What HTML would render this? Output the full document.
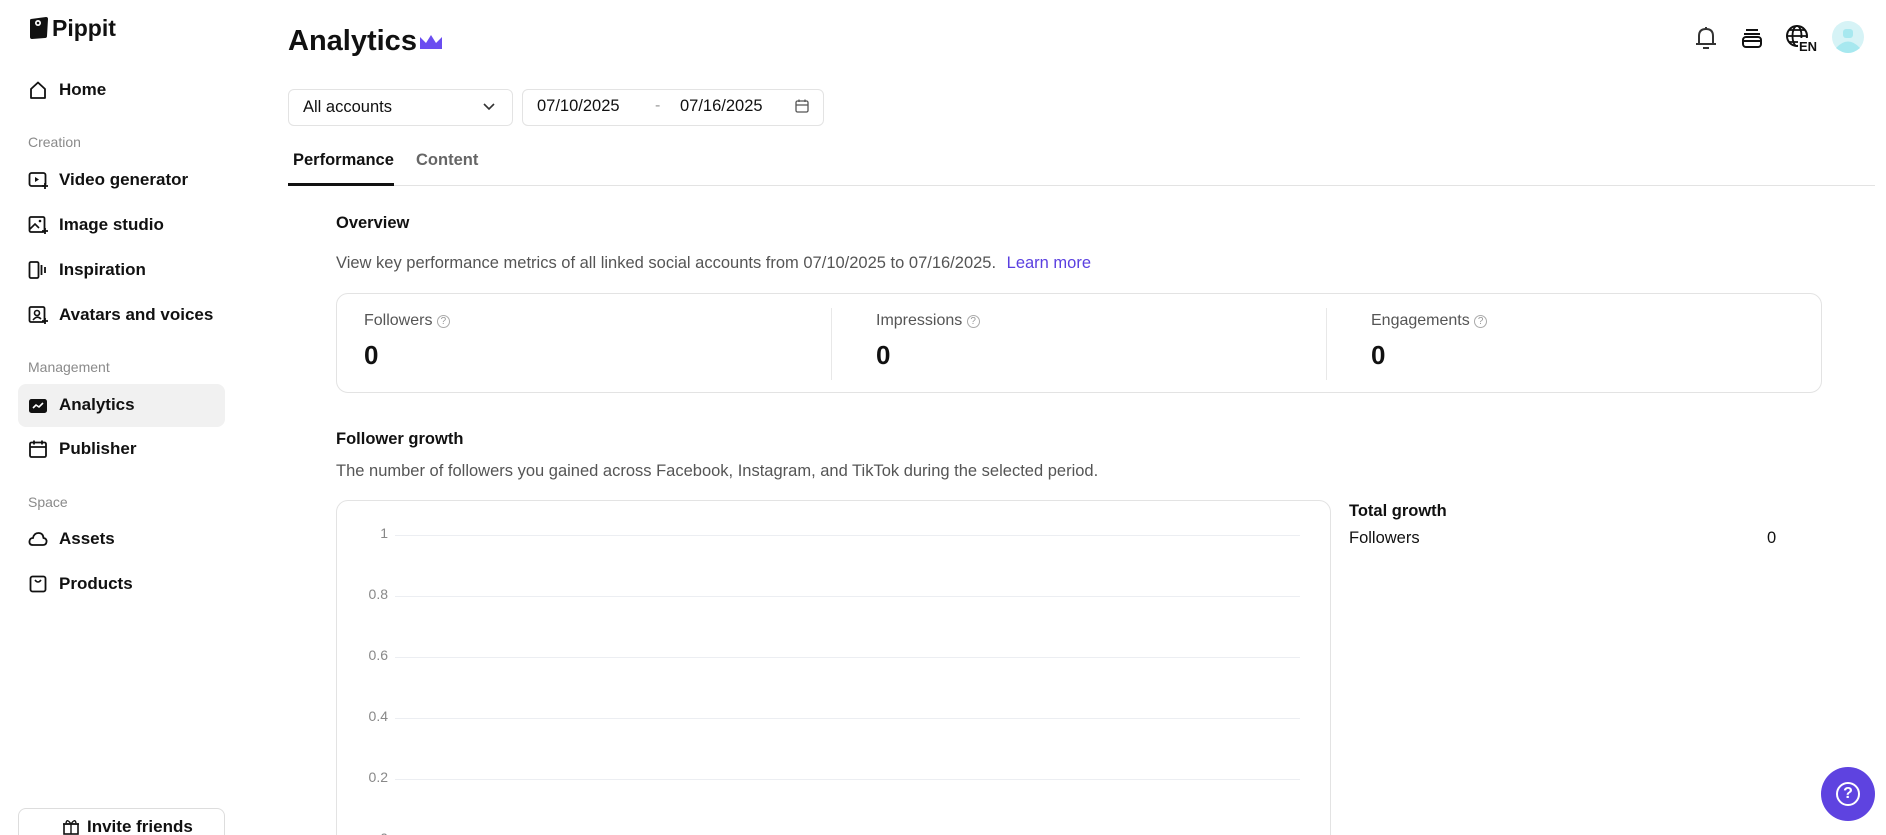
<!DOCTYPE html>
<html style="width:1886px;height:835px;overflow:hidden"><head><meta charset="utf-8"><style>
*{margin:0;padding:0;box-sizing:border-box}
body{width:1886px;height:835px;overflow:hidden;background:#fff;font-family:"Liberation Sans",Arial,sans-serif;color:#111;position:relative}
.a{position:absolute;white-space:nowrap}
.nav{font-size:17px;font-weight:600;color:#111}
.sec{font-size:14px;color:#8a8a8a}
.ic{position:absolute;left:28px;width:20px;height:20px}
.lbl{font-size:16px;color:#555}
.big{font-size:26px;font-weight:700}
.grid{position:absolute;left:395px;width:905px;height:1px;background:#eceef2}
.yl{position:absolute;width:50px;text-align:right;left:338px;font-size:14px;color:#888}
.q{color:#999;border:1px solid #aaa;border-radius:50%;display:inline-block;width:13px;height:13px;line-height:12px;text-align:center;font-size:10px;vertical-align:1px}
</style></head><body>
<svg class="a" style="left:29px;top:16px" width="20" height="24" viewBox="0 0 20 24"><path d="M2 3 L17 1 Q19 1 19 3 L18 20 Q18 22 16 22 L3 23 Q1 23 1 21 L1 5 Q1 3 2 3Z" fill="#111"/><circle cx="9" cy="7" r="3" fill="#fff"/><circle cx="9" cy="7" r="1.3" fill="#111"/></svg>
<div class="a" style="left:52px;top:15px;font-size:23px;font-weight:700">Pippit</div>

<svg class="ic" style="top:80px" viewBox="0 0 20 20"><path d="M3 9 L10 2.5 L17 9 V18 H3Z" fill="none" stroke="#111" stroke-width="1.8" stroke-linejoin="round"/></svg>
<div class="a nav" style="left:59px;top:80px">Home</div>
<div class="a sec" style="left:28px;top:134px">Creation</div>
<svg class="ic" style="top:170px" viewBox="0 0 20 20"><rect x="1.5" y="3" width="16" height="13" rx="2" fill="none" stroke="#111" stroke-width="1.8"/><path d="M7 7 L11 9.5 L7 12Z" fill="#111"/><path d="M17 13 v6 M14 16 h6" stroke="#111" stroke-width="1.8"/></svg>
<div class="a nav" style="left:59px;top:170px">Video generator</div>
<svg class="ic" style="top:215px" viewBox="0 0 20 20"><rect x="1.5" y="2" width="15" height="15" rx="1.5" fill="none" stroke="#111" stroke-width="1.8"/><path d="M2 14 L7 9 L11 13" fill="none" stroke="#111" stroke-width="1.6"/><circle cx="12" cy="6" r="1.3" fill="#111"/><path d="M17 13 v6 M14 16 h6" stroke="#111" stroke-width="1.8"/></svg>
<div class="a nav" style="left:59px;top:215px">Image studio</div>
<svg class="ic" style="top:260px" viewBox="0 0 20 20"><rect x="1.5" y="2" width="9" height="16" rx="1.5" fill="none" stroke="#111" stroke-width="1.8"/><path d="M13.5 5 v10 M17 7 v6" stroke="#111" stroke-width="1.8"/></svg>
<div class="a nav" style="left:59px;top:260px">Inspiration</div>
<svg class="ic" style="top:305px" viewBox="0 0 20 20"><rect x="1.5" y="2" width="15" height="15" rx="1.5" fill="none" stroke="#111" stroke-width="1.8"/><circle cx="9" cy="8" r="2.5" fill="none" stroke="#111" stroke-width="1.6"/><path d="M5 15 Q9 10 13 14" fill="none" stroke="#111" stroke-width="1.6"/><path d="M17 13 v6 M14 16 h6" stroke="#111" stroke-width="1.8"/></svg>
<div class="a nav" style="left:59px;top:305px">Avatars and voices</div>
<div class="a sec" style="left:28px;top:359px">Management</div>
<div class="a" style="left:18px;top:384px;width:207px;height:43px;background:#f1f1f1;border-radius:8px"></div>
<svg class="ic" style="top:396px" viewBox="0 0 20 20"><rect x="1" y="3" width="18" height="14" rx="2.5" fill="#111"/><path d="M5 12 L8 9 L11 11 L15 7" fill="none" stroke="#fff" stroke-width="1.6"/></svg>
<div class="a nav" style="left:59px;top:395px">Analytics</div>
<svg class="ic" style="top:439px" viewBox="0 0 20 20"><rect x="2" y="3.5" width="16" height="14.5" rx="1.5" fill="none" stroke="#111" stroke-width="1.8"/><path d="M2 8 h16 M6 1.5 v4 M14 1.5 v4" stroke="#111" stroke-width="1.8"/></svg>
<div class="a nav" style="left:59px;top:439px">Publisher</div>
<div class="a sec" style="left:28px;top:494px">Space</div>
<svg class="ic" style="top:529px" viewBox="0 0 20 20"><path d="M5 16 Q1 16 1.5 12 Q2 9 5 9 Q6 4 10.5 4 Q15 4 15.5 9 Q19 9.5 18.5 13 Q18 16 15 16Z" fill="none" stroke="#111" stroke-width="1.8"/></svg>
<div class="a nav" style="left:59px;top:529px">Assets</div>
<svg class="ic" style="top:574px" viewBox="0 0 20 20"><rect x="2.5" y="2.5" width="15" height="15" rx="2" fill="none" stroke="#111" stroke-width="1.8"/><path d="M7 6 Q10 10 13 6" fill="none" stroke="#111" stroke-width="1.6"/></svg>
<div class="a nav" style="left:59px;top:574px">Products</div>
<div class="a" style="left:18px;top:808px;width:207px;height:40px;border:1px solid #ddd;border-radius:8px"></div>
<svg class="a" style="left:62px;top:818px" width="18" height="18" viewBox="0 0 18 18"><rect x="2" y="6" width="14" height="10" fill="none" stroke="#111" stroke-width="1.6"/><path d="M1 6 h16 M9 6 v10 M9 6 Q5 0 4 5 M9 6 Q13 0 14 5" fill="none" stroke="#111" stroke-width="1.4"/></svg>
<div class="a nav" style="left:87px;top:817px">Invite friends</div>

<div class="a" style="left:288px;top:25px;font-size:29px;font-weight:700">Analytics</div>
<svg class="a" style="left:419px;top:33px" width="24" height="18" viewBox="0 0 24 18"><path d="M1 4 L7 10 L12 2 L17 10 L23 4 V16 H1Z" fill="#6a4df0"/></svg>
<svg class="a" style="left:1694px;top:24px" width="24" height="28" viewBox="0 0 24 28"><path d="M5 20 V12 Q5 5 12 5 Q19 5 19 12 V20 M2 20 H22 M9 24 H15 M12 3 V5" fill="none" stroke="#333" stroke-width="2"/></svg>
<svg class="a" style="left:1740px;top:26px" width="24" height="24" viewBox="0 0 24 24"><path d="M6 4 H18 M4 8 H20" stroke="#111" stroke-width="2"/><rect x="3" y="11" width="18" height="10" rx="3" fill="none" stroke="#111" stroke-width="2"/><path d="M3 15 H21" stroke="#111" stroke-width="2"/></svg>
<svg class="a" style="left:1785px;top:24px" width="34" height="28" viewBox="0 0 34 28"><circle cx="12" cy="12" r="10" fill="none" stroke="#111" stroke-width="2"/><ellipse cx="12" cy="12" rx="4.5" ry="10" fill="none" stroke="#111" stroke-width="1.8"/><path d="M2 12 H22 M4 6 H20 M4 18 H14" stroke="#111" stroke-width="1.8"/><rect x="13" y="14" width="21" height="14" fill="#fff"/><text x="14" y="27" font-family="Liberation Sans" font-weight="700" font-size="13" fill="#111">EN</text></svg>
<svg class="a" style="left:1832px;top:21px" width="32" height="32" viewBox="0 0 32 32"><circle cx="16" cy="16" r="16" fill="#d6f3f6"/><rect x="11" y="8" width="10" height="9" rx="3" fill="#a7e8ef"/><path d="M4 27 Q16 14 28 27 Q22 32 16 32 Q10 32 4 27Z" fill="#a7e8ef"/></svg>

<div class="a" style="left:288px;top:89px;width:225px;height:37px;border:1px solid #e3e3e3;border-radius:6px"></div>
<div class="a" style="left:303px;top:98px;font-size:16.5px">All accounts</div>
<svg class="a" style="left:482px;top:100px" width="14" height="14" viewBox="0 0 14 14"><path d="M2 4 L7 9 L12 4" fill="none" stroke="#333" stroke-width="1.6"/></svg>
<div class="a" style="left:522px;top:89px;width:302px;height:37px;border:1px solid #e3e3e3;border-radius:6px"></div>
<div class="a" style="left:537px;top:97px;font-size:16.5px">07/10/2025</div>
<div class="a" style="left:655px;top:97px;font-size:16px;color:#999">-</div>
<div class="a" style="left:680px;top:97px;font-size:16.5px">07/16/2025</div>
<svg class="a" style="left:794px;top:98px" width="16" height="16" viewBox="0 0 16 16"><rect x="2" y="3" width="12" height="11" rx="1.5" fill="none" stroke="#555" stroke-width="1.3"/><path d="M2 7 H14 M5 1.5 V4 M11 1.5 V4" stroke="#555" stroke-width="1.3"/></svg>

<div class="a" style="left:293px;top:151px;font-size:16.5px;font-weight:600">Performance</div>
<div class="a" style="left:416px;top:151px;font-size:16.5px;font-weight:600;color:#666">Content</div>
<div class="a" style="left:288px;top:185px;width:1587px;height:1px;background:#e3e3e3"></div>
<div class="a" style="left:288px;top:183px;width:106px;height:3px;background:#111"></div>

<div class="a" style="left:336px;top:214px;font-size:16.5px;font-weight:700">Overview</div>
<div class="a" style="left:336px;top:254px;font-size:16.5px;color:#555">View key performance metrics of all linked social accounts from 07/10/2025 to 07/16/2025. <span style="color:#5a3fe0;margin-left:6px">Learn more</span></div>
<div class="a" style="left:336px;top:293px;width:1486px;height:100px;border:1px solid #e3e3e3;border-radius:12px"></div>
<div class="a" style="left:831px;top:308px;width:1px;height:72px;background:#e8e8e8"></div>
<div class="a" style="left:1326px;top:308px;width:1px;height:72px;background:#e8e8e8"></div>
<div class="a lbl" style="left:364px;top:312px">Followers <span class="q">?</span></div>
<div class="a big" style="left:364px;top:340px">0</div>
<div class="a lbl" style="left:876px;top:312px">Impressions <span class="q">?</span></div>
<div class="a big" style="left:876px;top:340px">0</div>
<div class="a lbl" style="left:1371px;top:312px">Engagements <span class="q">?</span></div>
<div class="a big" style="left:1371px;top:340px">0</div>

<div class="a" style="left:336px;top:430px;font-size:16.5px;font-weight:700">Follower growth</div>
<div class="a" style="left:336px;top:462px;font-size:16.5px;color:#555">The number of followers you gained across Facebook, Instagram, and TikTok during the selected period.</div>
<div class="a" style="left:336px;top:500px;width:995px;height:360px;border:1px solid #e3e3e3;border-radius:12px"></div>
<div class="grid" style="top:535px"></div><div class="yl" style="top:525px">1</div>
<div class="grid" style="top:596px"></div><div class="yl" style="top:586px">0.8</div>
<div class="grid" style="top:657px"></div><div class="yl" style="top:647px">0.6</div>
<div class="grid" style="top:718px"></div><div class="yl" style="top:708px">0.4</div>
<div class="grid" style="top:779px"></div><div class="yl" style="top:769px">0.2</div>
<div class="yl" style="top:830px">0</div>
<div class="a" style="left:1349px;top:502px;font-size:16.5px;font-weight:700">Total growth</div>
<div class="a" style="left:1349px;top:529px;font-size:16.5px">Followers</div>
<div class="a" style="left:1767px;top:529px;font-size:16.5px">0</div>

<div class="a" style="left:1821px;top:767px;width:54px;height:54px;border-radius:50%;background:#5e43e0"></div>
<div class="a" style="left:1836px;top:782px;width:24px;height:24px;border:2.5px solid #fff;border-radius:50%;color:#fff;font-weight:700;font-size:16px;text-align:center;line-height:19px">?</div>
</body></html>
